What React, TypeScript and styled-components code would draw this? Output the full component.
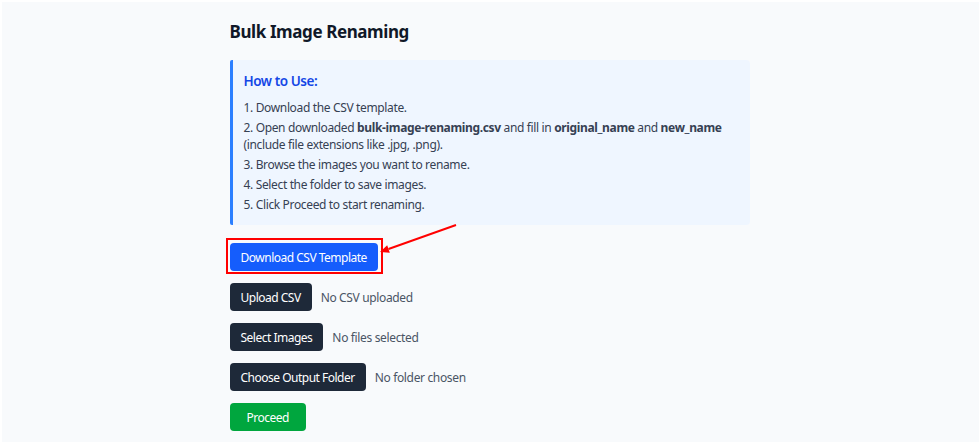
import * as React from 'react';
import styled, { createGlobalStyle } from 'styled-components';

const GlobalStyle = createGlobalStyle`
  html, body {
    margin: 0;
    padding: 0;
    background: #ffffff;
  }
  body {
    font-family: 'Noto Sans', 'Open Sans', sans-serif;
  }
`;

const Page = styled.div`
  margin: 2px 0 0 2px;
  min-height: 440px;
  background: #f8fafc;
`;

const Container = styled.div`
  width: 520px;
  margin: 0 auto;
  padding: 18px 0 0 0;
  position: relative;
  left: -1px;
`;

const Title = styled.h1`
  margin: 0 0 16px 0;
  font-size: 17px;
  line-height: 24px;
  font-weight: 700;
  letter-spacing: -0.4px;
  color: #101828;
`;

const InfoBox = styled.div`
  background: #eff6ff;
  border-left: 3px solid #2b7fff;
  border-radius: 2px 4px 4px 2px;
  padding: 11px 11px 12px 11px;
  margin-bottom: 18px;
`;

const InfoHeading = styled.h2`
  margin: 0 0 8px 0;
  font-size: 13.5px;
  line-height: 20px;
  font-weight: 600;
  letter-spacing: -0.45px;
  color: #1447e6;
`;

const Steps = styled.ol`
  list-style: none;
  margin: 0;
  padding: 0;
  display: flex;
  flex-direction: column;
  gap: 3px;
`;

const Step = styled.li`
  font-size: 12px;
  line-height: 17px;
  letter-spacing: -0.35px;
  color: #364153;
`;

const Actions = styled.div`
  display: flex;
  flex-direction: column;
  gap: 12px;
`;

const Row = styled.div`
  display: flex;
  align-items: center;
  gap: 9px;
  position: relative;
`;

const Button = styled.button<{ $tone: 'blue' | 'dark' | 'green' }>`
  height: 28px;
  padding: 0 ${(p) => (p.$tone === 'green' ? '17px' : '11px')};
  border: none;
  border-radius: 4px;
  font-family: inherit;
  font-size: 12px;
  letter-spacing: -0.5px;
  color: #ffffff;
  cursor: pointer;
  background: ${(p) =>
    p.$tone === 'blue' ? '#155dfc' : p.$tone === 'green' ? '#00a63e' : '#1e2939'};
`;

const Status = styled.span`
  font-size: 12px;
  letter-spacing: -0.35px;
  color: #4a5565;
`;

const Highlight = styled.div`
  position: absolute;
  left: -4px;
  top: -5px;
  width: 153px;
  height: 32px;
  border: 2px solid #ff0000;
  pointer-events: none;
`;

const Arrow = styled.svg`
  position: absolute;
  left: 140px;
  top: -22px;
  overflow: visible;
`;

export default function App() {
  return (
    <>
      <GlobalStyle />
      <Page>
        <Container>
          <Title>Bulk Image Renaming</Title>
          <InfoBox>
            <InfoHeading>How to Use:</InfoHeading>
            <Steps>
              <Step>1. Download the CSV template.</Step>
              <Step>
                2. Open downloaded <b>bulk-image-renaming.csv</b> and fill in <b>original_name</b> and{' '}
                <b>new_name</b>
                <br />
                (include file extensions like .jpg, .png).
              </Step>
              <Step>3. Browse the images you want to rename.</Step>
              <Step>4. Select the folder to save images.</Step>
              <Step>5. Click Proceed to start renaming.</Step>
            </Steps>
          </InfoBox>
          <Actions>
            <Row>
              <Button $tone="blue">Download CSV Template</Button>
              <Highlight />
              <Arrow width="90" height="40" viewBox="0 0 90 40">
                <line x1="86" y1="4" x2="18.5" y2="28" stroke="#ff0000" strokeWidth="2" />
                <polygon points="10,31 19.8,31.8 17.2,24.2" fill="#ff0000" />
              </Arrow>
            </Row>
            <Row>
              <Button $tone="dark">Upload CSV</Button>
              <Status>No CSV uploaded</Status>
            </Row>
            <Row>
              <Button $tone="dark">Select Images</Button>
              <Status>No files selected</Status>
            </Row>
            <Row>
              <Button $tone="dark">Choose Output Folder</Button>
              <Status>No folder chosen</Status>
            </Row>
            <Row>
              <Button $tone="green">Proceed</Button>
            </Row>
          </Actions>
        </Container>
      </Page>
    </>
  );
}
